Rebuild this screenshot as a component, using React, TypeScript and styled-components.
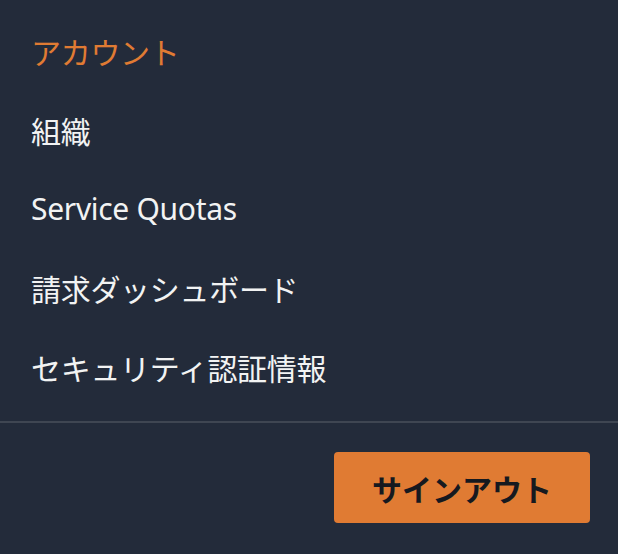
import { FC } from 'react';
import styled, { createGlobalStyle } from 'styled-components';

const GlobalStyle = createGlobalStyle`
  html, body {
    margin: 0;
    padding: 0;
    background: #232b3a;
  }
  body {
    font-family: 'Noto Sans', 'Noto Sans CJK JP', sans-serif;
  }
`;

const SMenu = styled.div`
  width: 618px;
  height: 554px;
  background: #232b3a;
  box-sizing: border-box;
  padding-top: 11px;
  display: flex;
  flex-direction: column;
`;

const SList = styled.ul`
  list-style: none;
  margin: 0;
  padding: 0 0 0 31px;
  display: flex;
  flex-direction: column;
`;

const SItem = styled.li<{ $active?: boolean }>`
  height: 79px;
  display: flex;
  align-items: center;
  font-size: 30px;
  font-weight: 400;
  letter-spacing: -0.3px;
  color: ${({ $active }) => ($active ? '#e07b33' : '#f2f3f3')};
`;

const SDivider = styled.hr`
  margin: 15px 0 0;
  border: none;
  height: 2px;
  background: #3f4652;
`;

const SFooter = styled.div`
  display: flex;
  justify-content: flex-end;
  padding: 29px 28px 0 0;
`;

const SButton = styled.button`
  width: 256px;
  height: 71px;
  border: none;
  border-radius: 4px;
  background: #e07b33;
  color: #16191f;
  font-family: 'Noto Sans', 'Noto Sans CJK JP', sans-serif;
  font-size: 30px;
  font-weight: 700;
  cursor: pointer;
`;

const items = ['組織', 'Service Quotas', '請求ダッシュボード', 'セキュリティ認証情報'];

const App: FC = () => (
  <>
    <GlobalStyle />
    <SMenu>
      <SList>
        <SItem $active>アカウント</SItem>
        {items.map((item) => (
          <SItem key={item}>{item}</SItem>
        ))}
      </SList>
      <SDivider />
      <SFooter>
        <SButton>サインアウト</SButton>
      </SFooter>
    </SMenu>
  </>
);

export default App;
